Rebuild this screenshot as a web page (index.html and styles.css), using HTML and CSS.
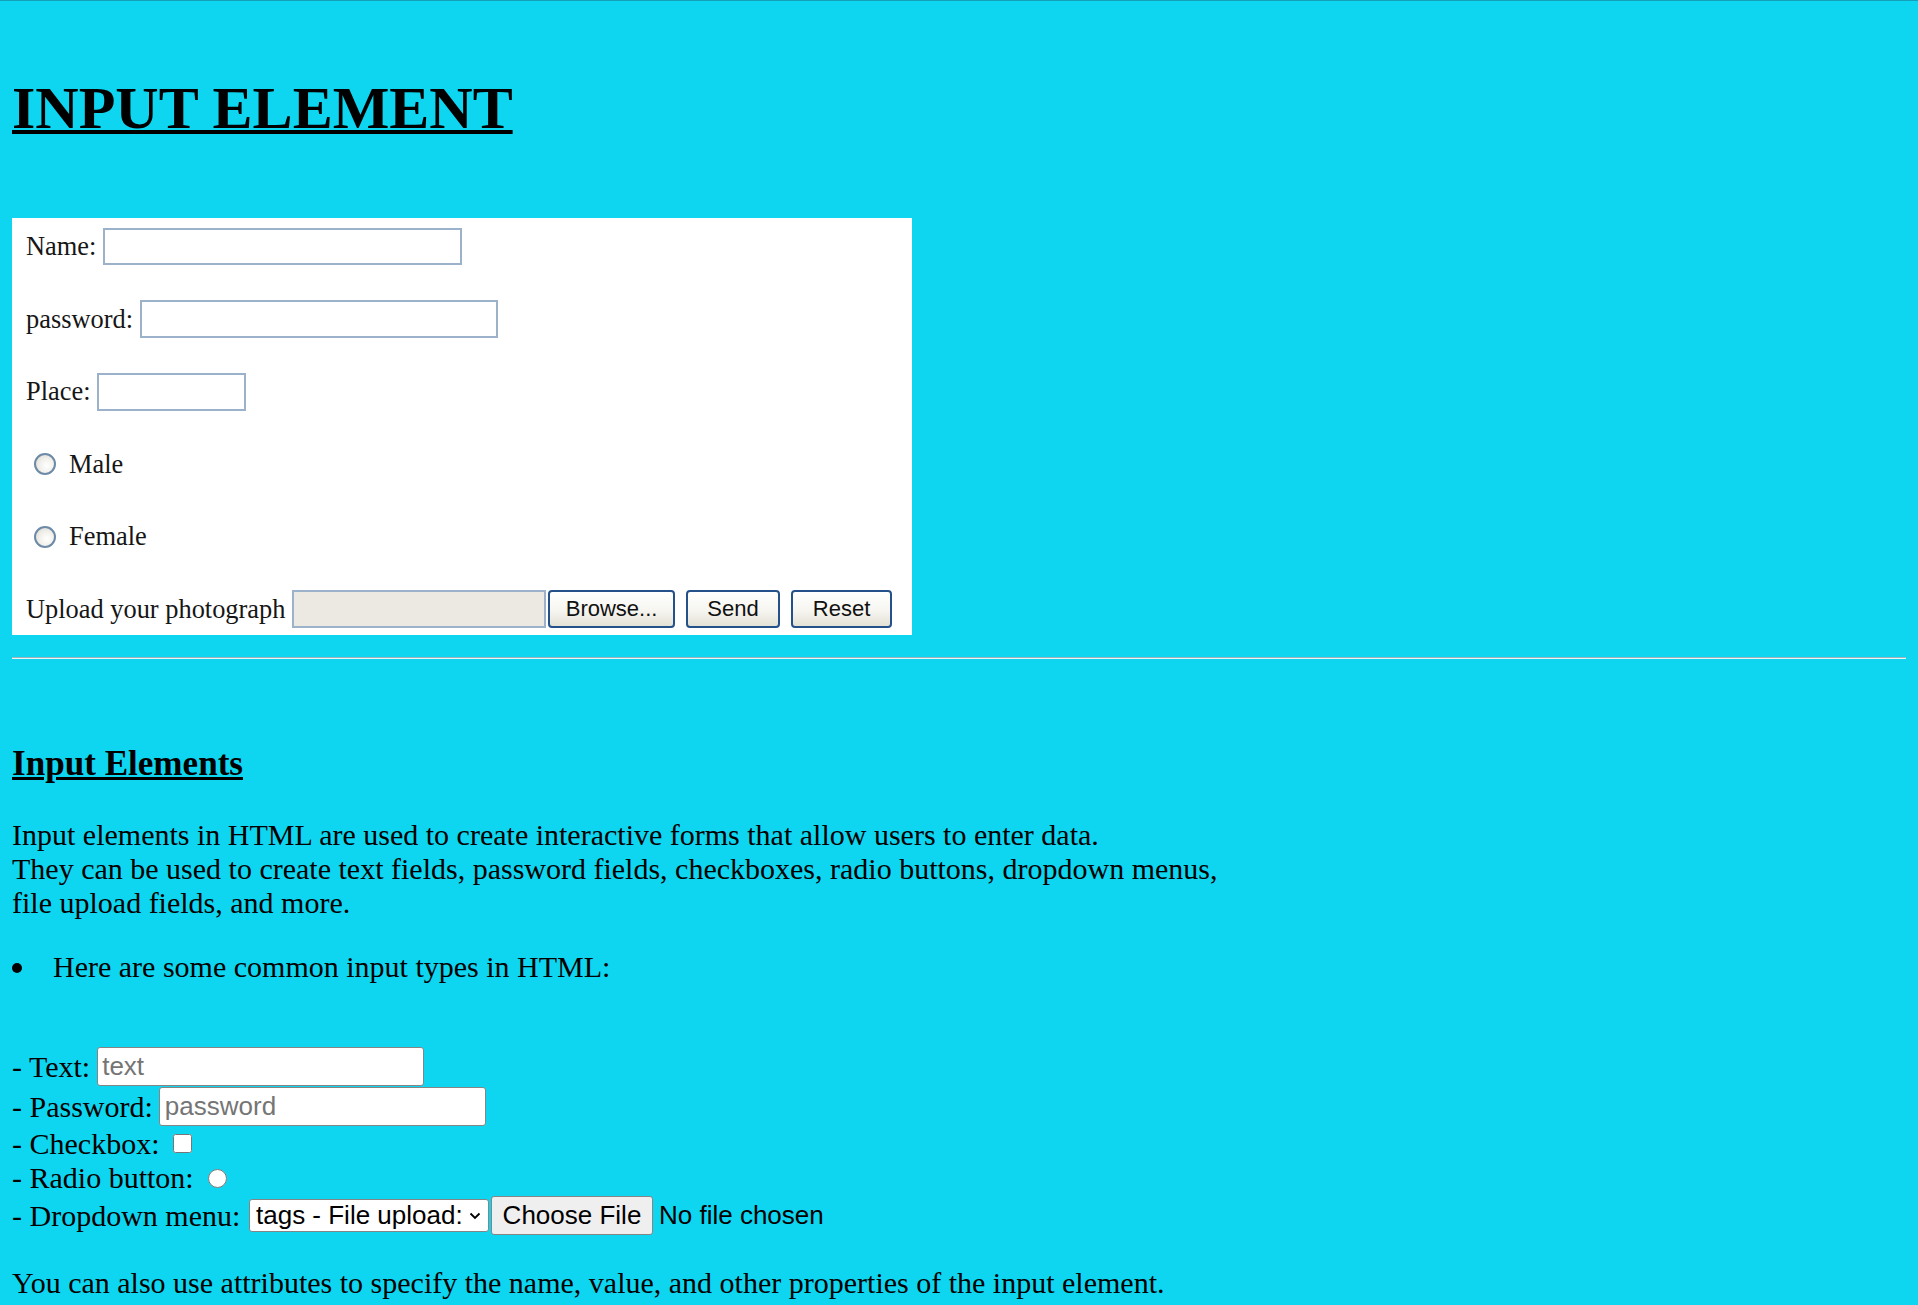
FILE: index.html
```html
<!DOCTYPE html>
<html lang="en">
<head>
<meta charset="utf-8">
<title>Input Element</title>
<link rel="stylesheet" href="styles.css">
</head>
<body>
<h1 class="title">INPUT ELEMENT</h1>

<form class="demo-form">
  <div class="f-row"><span class="f-label">Name:</span><input type="text" class="xp-input xp-name"></div>
  <div class="f-row"><span class="f-label">password:</span><input type="password" class="xp-input xp-pass"></div>
  <div class="f-row"><span class="f-label">Place:</span><input type="text" class="xp-input xp-place"></div>
  <div class="f-row f-radio"><input type="radio" name="g" class="xp-radio"><span class="f-label">Male</span></div>
  <div class="f-row f-radio"><input type="radio" name="g" class="xp-radio"><span class="f-label">Female</span></div>
  <div class="f-row"><span class="f-label">Upload your photograph</span><span class="xp-input xp-file"></span><button type="button" class="xp-btn xp-browse">Browse...</button><button type="button" class="xp-btn xp-send">Send</button><button type="button" class="xp-btn xp-reset">Reset</button></div>
</form>

<hr class="rule">

<h3 class="sub">Input Elements</h3>
<p class="intro">Input elements in HTML are used to create interactive forms that allow users to enter data.<br>They can be used to create text fields, password fields, checkboxes, radio buttons, dropdown menus,<br>file upload fields, and more.</p>

<ul class="list">
  <li>Here are some common input types in HTML:</li>
</ul>

<div class="types">
  <div class="t-row"><span>- Text:</span><input type="text" class="m-input m-text" placeholder="text"></div>
  <div class="t-row"><span>- Password:</span><input type="password" class="m-input m-pass" placeholder="password"></div>
  <div class="t-row t-short"><span>- Checkbox:</span><input type="checkbox" class="m-check"></div>
  <div class="t-row t-short"><span>- Radio button:</span><input type="radio" class="m-radio"></div>
  <div class="t-row"><span>- Dropdown menu:</span><span class="m-select">tags - File upload:<svg class="chev" width="12" height="8" viewBox="0 0 12 8"><path d="M1.5 1.5 L6 6 L10.5 1.5" fill="none" stroke="#000" stroke-width="1.8"/></svg></span><button type="button" class="m-file-btn">Choose File</button><span class="m-file-text">No file chosen</span></div>
</div>

<p class="outro">You can also use attributes to specify the name, value, and other properties of the input element.</p>
</body>
</html>
```

FILE: styles.css
```css
html {
  border-top: 1px solid #169fb9;
  background: #0ed6f0;
}

body {
  margin: 0;
  padding: 0 12px;
  font-family: "Liberation Serif", "Times New Roman", serif;
  font-size: 30px;
  color: #000;
}

.title {
  font-size: 60px;
  font-weight: bold;
  text-decoration: underline;
  text-decoration-thickness: 4px;
  margin: 73px 0 75px;
}

/* old-style form picture */
.demo-form {
  width: 900px;
  height: 417px;
  box-sizing: border-box;
  background: #fff;
  padding: 9.5px 0 0 14px;
  display: flex;
  flex-direction: column;
  gap: 34.6px;
  font-family: "Liberation Serif", "Times New Roman", serif;
  font-size: 26.4px;
  color: #161616;
  margin: 0;
}

.f-row {
  height: 38px;
  display: flex;
  align-items: center;
}

.f-radio {
  padding-left: 8px;
}

.xp-input {
  display: block;
  margin: 0 0 0 6.6px;
  height: 38px;
  box-sizing: border-box;
  border: 2px solid #9cb2ca;
  background: #fff;
  padding: 0;
}

.xp-name { width: 359px; height: 37px; }
.xp-pass { width: 358px; }
.xp-place { width: 149px; }
.xp-file { width: 254px; background: #ebe9e1; }

.xp-radio {
  appearance: none;
  -webkit-appearance: none;
  margin: 0 13px 0 0;
  width: 22px;
  height: 22px;
  box-sizing: border-box;
  border-radius: 50%;
  border: 2px solid #6d8aa8;
  background: radial-gradient(circle at 60% 60%, #ffffff 0%, #f2f1ec 45%, #d8d6cc 100%);
}

.xp-btn {
  height: 38px;
  box-sizing: border-box;
  border: 2px solid #24518a;
  border-radius: 4px;
  background: linear-gradient(#ffffff 0%, #f6f5f0 55%, #e4e1d6 100%);
  font-family: "Liberation Sans", Arial, sans-serif;
  font-size: 22px;
  color: #111;
  padding: 0;
  margin-left: 11px;
}

.xp-browse { width: 127px; margin-left: 2px; }
.xp-send { width: 94px; }
.xp-reset { width: 101px; }

.rule {
  border: 0;
  border-top: 1px solid #9fb4ba;
  border-bottom: 1px solid #e9f6f8;
  height: 0;
  margin: 22px 0 0;
}

.sub {
  font-size: 35.1px;
  font-weight: bold;
  text-decoration: underline;
  margin: 84.5px 0 34px;
}

.intro {
  margin: 0;
}

.list {
  list-style: none;
  margin: 30px 0 0;
  padding: 0;
}

.list li {
  display: flex;
}

.list li::before {
  content: "";
  width: 10px;
  height: 10px;
  border-radius: 50%;
  background: #000;
  margin: 13.5px 31px 0 0;
  flex: none;
}

.types {
  margin-top: 63px;
}

.t-row {
  height: 40px;
  display: flex;
  align-items: center;
}

.t-short {
  height: 34.5px;
}

.m-input {
  margin: 0 0 0 6.5px;
  width: 327px;
  height: 39px;
  box-sizing: border-box;
  font-family: "Liberation Sans", Arial, sans-serif;
  font-size: 26px;
  border: 1.5px solid #858585;
  border-radius: 3px;
  padding: 0 4.5px;
  background: #fff;
  color: #000;
}

.m-input::placeholder {
  color: #757575;
}

.m-check {
  margin: 0 0 0 13.5px;
  width: 19px;
  height: 19px;
}

.m-radio {
  margin: 0 0 0 14.5px;
  width: 19px;
  height: 19px;
}

.m-select {
  margin-left: 8.7px;
  width: 240px;
  height: 33px;
  box-sizing: border-box;
  border: 1.5px solid #858585;
  border-radius: 3px;
  background: #fff;
  display: flex;
  align-items: center;
  justify-content: space-between;
  padding: 0 7px 0 6px;
  font-family: "Liberation Sans", Arial, sans-serif;
  font-size: 26px;
  white-space: nowrap;
}

.chev {
  flex: none;
}

.m-file-btn {
  margin-left: 2px;
  width: 162px;
  height: 39px;
  box-sizing: border-box;
  border: 1.5px solid #858585;
  border-radius: 3px;
  background: #efefef;
  font-family: "Liberation Sans", Arial, sans-serif;
  font-size: 26px;
  color: #000;
  padding: 0;
}

.m-file-text {
  margin-left: 6px;
  font-family: "Liberation Sans", Arial, sans-serif;
  font-size: 26px;
}

.outro {
  margin: 30.5px 0 0;
}
```
